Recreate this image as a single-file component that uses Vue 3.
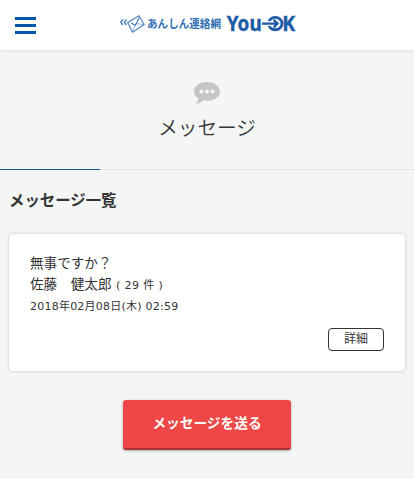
<script setup>
import { ref } from "vue"

const messages = ref([
  {
    id: 1,
    title: "無事ですか？",
    sender: "佐藤　健太郎",
    count: 29,
    date: "2018年02月08日(木) 02:59",
  },
])
</script>

<template>
  <div class="page">
    <header class="header">
      <button class="menu-button" aria-label="メニュー">
        <span class="bar"></span>
        <span class="bar"></span>
        <span class="bar"></span>
      </button>
      <svg class="logo" width="178" height="24" viewBox="0 0 178 24">
        <g fill="none" stroke="#4a80bc">
          <path d="M4 7.500 1.800 10l2 3M7.600 7.500 5.400 10l2 3" stroke-width="1.400" />
          <path d="M8.700 10.500 20 3.800l5.200 8.700-11.700 7.700z" stroke-width="1.100" />
          <path d="m12.200 11 4.200 2.300 3.800-7.500" stroke-width="1.300" />
          <path d="m13.500 20 2-6M25 12.500l-6.800-.8" stroke-width=".6" />
        </g>
        <text class="logo-ja" x="28" y="15.800" textLength="74" lengthAdjust="spacingAndGlyphs">あんしん連絡網</text>
        <text class="logo-en" x="107.700" y="18.900" textLength="35" lengthAdjust="spacingAndGlyphs">You</text>
        <g fill="none">
          <ellipse cx="156.300" cy="11.600" rx="6.800" ry="6.200" stroke="#1e5ca8" stroke-width="2.900" />
          <path d="M147 11.600h6" stroke="#fff" stroke-width="5" />
          <path d="M143 11.600h15.500M154.600 7.800l4 3.800-4 3.800" stroke="#1e5ca8" stroke-width="2.300" />
        </g>
        <text class="logo-en" x="163.300" y="18.900" textLength="13" lengthAdjust="spacingAndGlyphs">K</text>
      </svg>
    </header>

    <div class="page-title">
      <svg class="bubble" width="26" height="22" viewBox="0 0 26 22">
        <path
          d="M13 0C5.800 0 0 4.200 0 9.400c0 2.900 1.800 5.400 4.600 7.100-.2 1.900-1.200 3.500-2.500 4.400-.4.400-.2.800.3.800 3-.3 5.200-1.700 6.700-3.400 1.200.3 2.500.4 3.900.4 7.200 0 13-4.100 13-9.300S20.200 0 13 0z"
          fill="#c4c6c6"
        />
        <circle cx="7.500" cy="9.500" r="2" fill="#f4f6f6" />
        <circle cx="13" cy="9.500" r="2" fill="#f4f6f6" />
        <circle cx="18.500" cy="9.500" r="2" fill="#f4f6f6" />
      </svg>
      <h1>メッセージ</h1>
    </div>

    <main class="content">
      <h2>メッセージ一覧</h2>

      <section v-for="message in messages" :key="message.id" class="card">
        <p class="line">{{ message.title }}</p>
        <p class="line">
          {{ message.sender }} <span class="small">( {{ message.count }} 件 )</span>
        </p>
        <p class="date">{{ message.date }}</p>
        <button class="detail-button">詳細</button>
      </section>

      <button class="send-button">メッセージを送る</button>
    </main>
  </div>
</template>

<style>
body {
  background-color: #f4f6f6;
}
</style>

<style scoped>
.page {
  box-sizing: border-box;
  min-height: 479px;
  background-color: #f4f6f6;
  color: #333;
  font-family: "DejaVu Sans", "Noto Sans CJK JP", sans-serif;
}

button {
  font-family: inherit;
  cursor: pointer;
}

.header {
  display: flex;
  align-items: center;
  box-sizing: border-box;
  height: 50px;
  padding: 0 15px;
  background-color: #fff;
  box-shadow: 0 1px 4px rgba(0, 0, 0, 0.1);
}

.menu-button {
  display: flex;
  flex-direction: column;
  gap: 4px;
  width: 20px;
  padding: 0;
  border: none;
  background: none;
}

.bar {
  width: 21px;
  height: 3px;
  background-color: #0056a8;
}

.logo {
  margin-left: 84px;
  margin-bottom: 2px;
  overflow: visible;
}

.logo-ja {
  font-family: "Noto Sans CJK JP", sans-serif;
  font-size: 11.5px;
  font-weight: 700;
  fill: #326fb2;
}

.logo-en {
  font-family: "Noto Sans", sans-serif;
  font-size: 21px;
  font-weight: 700;
  fill: #1e5ca8;
  stroke: #1e5ca8;
  stroke-width: 0.4px;
}

.page-title {
  display: flex;
  flex-direction: column;
  align-items: center;
  box-sizing: border-box;
  height: 120px;
  padding-top: 32px;
  background-image: linear-gradient(to right, #125a9e 100px, #e4e6e6 100px);
  background-repeat: no-repeat;
  background-position: left bottom;
  background-size: 100% 1px;
}

.bubble {
  display: block;
}

h1 {
  margin: 11px 0 0;
  font-size: 19.6px;
  font-weight: 350;
  line-height: 28px;
}

.content {
  display: flex;
  flex-direction: column;
  padding: 20px 9px 0;
}

h2 {
  margin: 0;
  font-size: 15.4px;
  font-weight: 700;
  line-height: 22px;
}

.card {
  display: flex;
  flex-direction: column;
  box-sizing: border-box;
  height: 137px;
  margin: 22px 0 0;
  padding: 19px 21px 20px;
  border-radius: 4px;
  background-color: #fff;
  box-shadow: 0 0 3px rgba(0, 0, 0, 0.25);
}

.line,
.date {
  margin: 0;
  line-height: 21px;
}

.line {
  font-size: 13.6px;
}

.small,
.date {
  font-size: 11px;
  letter-spacing: 0.23px;
}

.small {
  letter-spacing: 0.4px;
}

.detail-button {
  align-self: flex-end;
  box-sizing: border-box;
  width: 56px;
  height: 23px;
  margin-top: 11px;
  padding: 0;
  border: 1px solid #333;
  border-radius: 4px;
  background-color: #fff;
  color: #333;
  font-size: 12px;
  line-height: 19px;
}

.send-button {
  align-self: center;
  box-sizing: border-box;
  width: 168px;
  height: 50px;
  margin-top: 29px;
  padding: 0 0 4px;
  border: none;
  border-bottom: 2px solid #a93232;
  border-radius: 3px;
  background-color: #ef4747;
  box-shadow: 0 1px 3px rgba(0, 0, 0, 0.3);
  color: #fff;
  font-size: 13.7px;
  font-weight: 700;
}
</style>
